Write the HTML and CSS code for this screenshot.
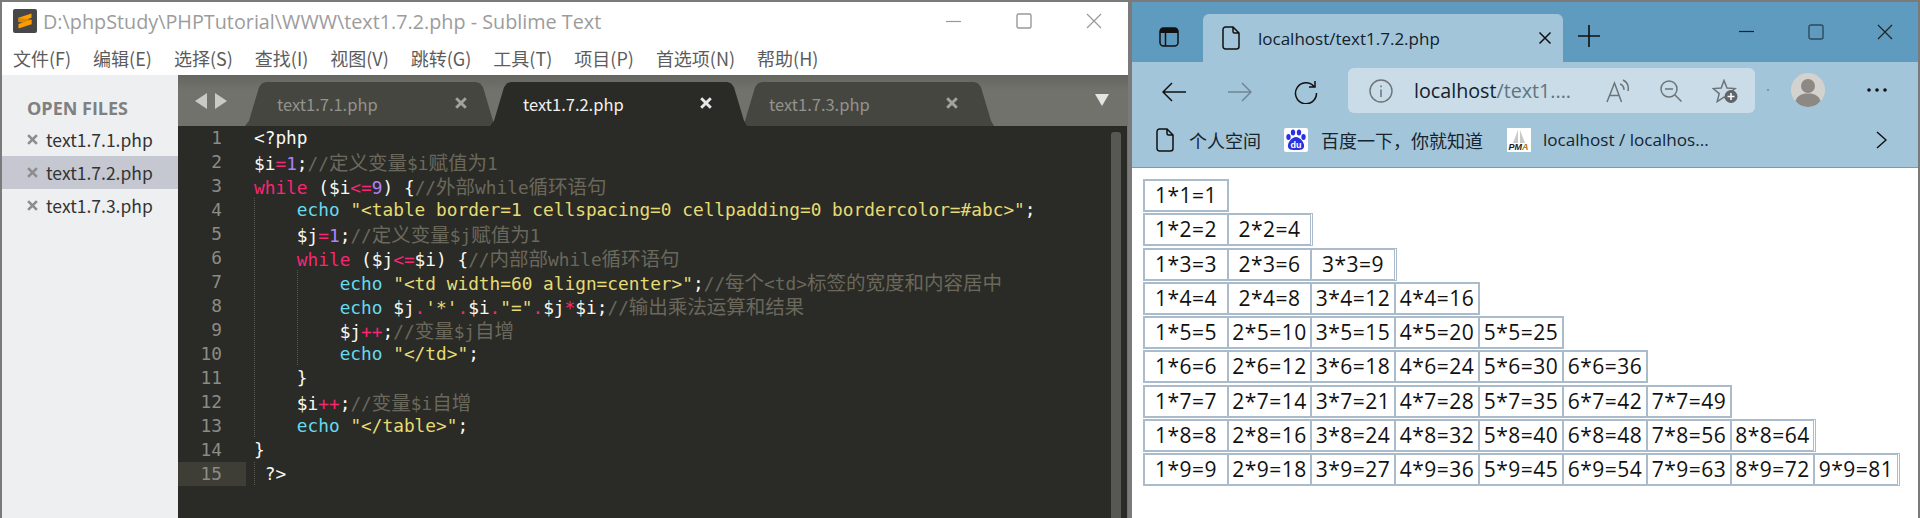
FILE: index.html
```html
<!DOCTYPE html>
<html lang="zh">
<head>
<meta charset="utf-8">
<title>Sublime Text and browser</title>
<link rel="stylesheet" href="styles.css">
</head>
<body>
<div class="desktop">
  <section class="sublime">
    <header class="st-title">
      <svg class="st-logo" viewBox="0 0 24 24"><rect width="24" height="24" rx="2" fill="#474747"/><path d="M18.500 4.500 5.500 8.800v4.200l13-4.300z" fill="#ffa200"/><path d="M5.500 13 18.500 15.200v-4.400L5.500 8.800z" fill="#e08600"/><path d="M18.500 10.800 5.500 15.100v4.300l13-4.200z" fill="#ff9d00"/></svg>
      <span class="st-title-text">D:\phpStudy\PHPTutorial\WWW\text1.7.2.php - Sublime Text</span>
      <div class="st-controls">
        <svg class="ctl" viewBox="0 0 16 16"><path d="M0 8.500h15" stroke="#999" stroke-width="1.200"/></svg>
        <svg class="ctl" viewBox="0 0 16 16"><rect x="1" y="1" width="14" height="14" rx="1.500" fill="none" stroke="#999" stroke-width="1.400"/></svg>
        <svg class="ctl" viewBox="0 0 16 16"><path d="M1 1l14 14M15 1 1 15" stroke="#999" stroke-width="1.200"/></svg>
      </div>
    </header>
    <nav class="st-menu">
      <span>文件(F)</span><span>编辑(E)</span><span>选择(S)</span><span>查找(I)</span><span>视图(V)</span><span>跳转(G)</span><span>工具(T)</span><span>项目(P)</span><span>首选项(N)</span><span>帮助(H)</span>
    </nav>
    <div class="st-body">
      <aside class="st-side">
        <h2 class="side-head">OPEN FILES</h2>
        <div class="side-row"><svg class="x" viewBox="0 0 10 10"><path d="M1 1l8 8M9 1 1 9"/></svg>text1.7.1.php</div>
        <div class="side-row side-sel"><svg class="x" viewBox="0 0 10 10"><path d="M1 1l8 8M9 1 1 9"/></svg>text1.7.2.php</div>
        <div class="side-row"><svg class="x" viewBox="0 0 10 10"><path d="M1 1l8 8M9 1 1 9"/></svg>text1.7.3.php</div>
      </aside>
      <main class="st-main">
        <div class="tabbar">
          <div class="arrows">
            <svg viewBox="0 0 12 16" class="arrow"><path d="M12 0v16L0 8z" fill="#c9c9c6"/></svg>
            <svg viewBox="0 0 12 16" class="arrow"><path d="M0 0v16l12-8z" fill="#c9c9c6"/></svg>
          </div>
          <div class="tab tab-1"><span>text1.7.1.php</span><svg class="tab-x" viewBox="0 0 10 10"><path d="M1 1l8 8M9 1 1 9"/></svg></div>
          <div class="tab tab-active tab-2"><span>text1.7.2.php</span><svg class="tab-x" viewBox="0 0 10 10"><path d="M1 1l8 8M9 1 1 9"/></svg></div>
          <div class="tab tab-3"><span>text1.7.3.php</span><svg class="tab-x" viewBox="0 0 10 10"><path d="M1 1l8 8M9 1 1 9"/></svg></div>
          <svg viewBox="0 0 14 12" class="tab-drop"><path d="M0 0h14L7 12z" fill="#e4e4e2"/></svg>
        </div>
        <div class="editor">
          <div class="lines">
            <div class="l"><b>1</b><code>&lt;?php</code></div>
            <div class="l"><b>2</b><code>$i<u>=</u><s>1</s>;<em>//<q>定义变量</q>$i<q>赋值为</q>1</em></code></div>
            <div class="l"><b>3</b><code><u>while</u> ($i<u>&lt;=</u><s>9</s>) {<em>//<q>外部</q>while<q>循环语句</q></em></code></div>
            <div class="l g1"><b>4</b><code>    <a>echo</a> <var>"&lt;table border=1 cellspacing=0 cellpadding=0 bordercolor=#abc&gt;"</var>;</code></div>
            <div class="l g1"><b>5</b><code>    $j<u>=</u><s>1</s>;<em>//<q>定义变量</q>$j<q>赋值为</q>1</em></code></div>
            <div class="l g1"><b>6</b><code>    <u>while</u> ($j<u>&lt;=</u>$i) {<em>//<q>内部部</q>while<q>循环语句</q></em></code></div>
            <div class="l g2"><b>7</b><code>        <a>echo</a> <var>"&lt;td width=60 align=center&gt;"</var>;<em>//<q>每个</q>&lt;td&gt;<q>标签的宽度和内容居中</q></em></code></div>
            <div class="l g2"><b>8</b><code>        <a>echo</a> $j<u>.</u><var>'*'</var><u>.</u>$i<u>.</u><var>"="</var><u>.</u>$j<u>*</u>$i;<em>//<q>输出乘法运算和结果</q></em></code></div>
            <div class="l g2"><b>9</b><code>        $j<u>++</u>;<em>//<q>变量</q>$j<q>自增</q></em></code></div>
            <div class="l g2"><b>10</b><code>        <a>echo</a> <var>"&lt;/td&gt;"</var>;</code></div>
            <div class="l g1"><b>11</b><code>    }</code></div>
            <div class="l g1"><b>12</b><code>    $i<u>++</u>;<em>//<q>变量</q>$i<q>自增</q></em></code></div>
            <div class="l g1"><b>13</b><code>    <a>echo</a> <var>"&lt;/table&gt;"</var>;</code></div>
            <div class="l"><b>14</b><code>}</code></div>
            <div class="l cur g1"><b>15</b><code> ?&gt;</code></div>
          </div>
          <div class="scroll"></div>
        </div>
      </main>
    </div>
  </section>

  <section class="browser">
    <div class="br-top">
      <svg class="i-panel" viewBox="0 0 20 20"><rect x="1" y="1" width="18" height="18" rx="3.500" fill="none" stroke="#111" stroke-width="1.500"/><path d="M1 6V4.500A3.500 3.500 0 0 1 4.500 1h11A3.500 3.500 0 0 1 19 4.500V6z" fill="#111"/><path d="M6.500 6v13" stroke="#111" stroke-width="1.500"/></svg>
      <div class="br-tab">
        <svg class="i-file" viewBox="0 0 18 24"><path d="M3.500 1H11l6 6v13.500a2.500 2.500 0 0 1-2.500 2.500h-11A2.500 2.500 0 0 1 1 20.500v-17A2.500 2.500 0 0 1 3.500 1zM11 1v4.500A1.500 1.500 0 0 0 12.500 7H17" fill="none" stroke="#111" stroke-width="1.500"/></svg>
        <span class="br-tab-text">localhost/text1.7.2.php</span>
        <svg class="i-tabx" viewBox="0 0 14 14"><path d="M1.500 1.500l11 11M12.500 1.500l-11 11" stroke="#111" stroke-width="1.500"/></svg>
      </div>
      <svg class="i-plus" viewBox="0 0 22 22"><path d="M11 0v22M0 11h22" stroke="#111" stroke-width="1.600"/></svg>
      <div class="br-controls">
        <svg class="ctl" viewBox="0 0 16 16"><path d="M0 7.500h15" stroke="#222" stroke-width="1.200"/></svg>
        <svg class="ctl" viewBox="0 0 16 16"><rect x="1" y="1" width="14" height="14" rx="2" fill="none" stroke="#2c4a5e" stroke-width="1.400"/></svg>
        <svg class="ctl" viewBox="0 0 16 16"><path d="M1 1l14 14M15 1 1 15" stroke="#222" stroke-width="1.200"/></svg>
      </div>
    </div>
    <div class="br-toolbar">
      <svg class="tb tb-back" viewBox="0 0 24 20"><path d="M24 10H1M10 1l-9 9 9 9" fill="none" stroke="#111" stroke-width="1.500"/></svg>
      <svg class="tb tb-fwd" viewBox="0 0 24 20"><path d="M0 10h23M14 1l9 9-9 9" fill="none" stroke="#6f8594" stroke-width="1.500"/></svg>
      <svg class="tb tb-ref" viewBox="0 0 24 24"><path d="M20 6.500A10.500 10.500 0 1 0 22.500 13M21 1v6h-6" fill="none" stroke="#111" stroke-width="1.500"/></svg>
      <div class="addr">
        <svg class="a-info" viewBox="0 0 24 24"><circle cx="12" cy="12" r="11" fill="none" stroke="#6c7478" stroke-width="1.400"/><path d="M12 10.500V18M12 6.500v1.800" stroke="#6c7478" stroke-width="1.500"/></svg>
        <span class="addr-text">localhost<span class="addr-dim">/text1....</span></span>
        <svg class="a-read" viewBox="0 0 24 24"><path d="M1 23 8.500 4l7 19M3.500 16.500h10" fill="none" stroke="#6c7478" stroke-width="1.500"/><path d="M14 5c3 1 4 3 4 6M17 1c4 2 6 6 5 11" fill="none" stroke="#6c7478" stroke-width="1.500"/></svg>
        <svg class="a-zoom" viewBox="0 0 22 22"><circle cx="9" cy="9" r="8" fill="none" stroke="#6c7478" stroke-width="1.500"/><path d="M5 9h8M15 15l6.500 6.500" stroke="#6c7478" stroke-width="1.500"/></svg>
        <svg class="a-fav" viewBox="0 0 26 24"><path d="M12 1.500l3 7.500 8 .6-6.200 5 2 7.500-6.800-4-6.800 4.500 2-8-6-5 8-.6z" fill="none" stroke="#6c7478" stroke-width="1.500"/><circle cx="19" cy="17.500" r="6.500" fill="#5e6468"/><path d="M19 14v7M15.500 17.500h7" stroke="#fff" stroke-width="1.500"/></svg>
      </div>
      <i class="tb-dot"></i>
      <svg class="avatar" viewBox="0 0 34 34"><circle cx="17" cy="17" r="17" fill="#d4d2ce"/><circle cx="17" cy="13" r="7" fill="#8c8883"/><path d="M4.500 28c2-6 7-7.500 12.500-7.500S27.500 22 29.500 28A17 17 0 0 1 17 34 17 17 0 0 1 4.500 28z" fill="#8c8883"/></svg>
      <svg class="dots" viewBox="0 0 20 4"><circle cx="2" cy="2" r="1.800" fill="#111"/><circle cx="10" cy="2" r="1.800" fill="#111"/><circle cx="18" cy="2" r="1.800" fill="#111"/></svg>
    </div>
    <div class="br-marks">
      <svg class="i-file m-file" viewBox="0 0 18 24"><path d="M3.500 1H11l6 6v13.500a2.500 2.500 0 0 1-2.500 2.500h-11A2.500 2.500 0 0 1 1 20.500v-17A2.500 2.500 0 0 1 3.500 1zM11 1v4.500A1.500 1.500 0 0 0 12.500 7H17" fill="none" stroke="#111" stroke-width="1.500"/></svg>
      <span class="mark m1">个人空间</span>
      <svg class="fav-ic" viewBox="0 0 24 24"><rect width="24" height="24" rx="2" fill="#fff"/><g fill="#2932e1"><ellipse cx="4.500" cy="9" rx="2.200" ry="3"/><ellipse cx="9" cy="4.500" rx="2.200" ry="3"/><ellipse cx="15" cy="4.500" rx="2.200" ry="3"/><ellipse cx="19.500" cy="9" rx="2.200" ry="3"/><path d="M12 9c4 0 9 6 8 10-1 3-4 3-8 3s-7 0-8-3c-1-4 4-10 8-10z"/></g><text x="12" y="20" class="du">du</text></svg>
      <span class="mark m2">百度一下，你就知道</span>
      <svg class="fav-ic" viewBox="0 0 24 24"><rect width="24" height="24" fill="#fff"/><path d="M11 2 6 15h5zM13 2l5 13h-5z" fill="#c9c9c9"/><text x="1.500" y="22" class="pma">PM<tspan class="pma-o">A</tspan></text></svg>
      <span class="mark m3">localhost / localhos...</span>
      <svg class="chev" viewBox="0 0 11 18"><path d="M1 1l9 8-9 8" fill="none" stroke="#111" stroke-width="1.500"/></svg>
    </div>
    <div class="page">
      <table class="mt"><tr><td>1*1=1</td></tr></table>
      <table class="mt mt-gap"><tr><td>1*2=2</td><td>2*2=4</td></tr></table>
      <table class="mt mt-gap"><tr><td>1*3=3</td><td>2*3=6</td><td>3*3=9</td></tr></table>
      <table class="mt"><tr><td>1*4=4</td><td>2*4=8</td><td>3*4=12</td><td>4*4=16</td></tr></table>
      <table class="mt"><tr><td>1*5=5</td><td>2*5=10</td><td>3*5=15</td><td>4*5=20</td><td>5*5=25</td></tr></table>
      <table class="mt"><tr><td>1*6=6</td><td>2*6=12</td><td>3*6=18</td><td>4*6=24</td><td>5*6=30</td><td>6*6=36</td></tr></table>
      <table class="mt"><tr><td>1*7=7</td><td>2*7=14</td><td>3*7=21</td><td>4*7=28</td><td>5*7=35</td><td>6*7=42</td><td>7*7=49</td></tr></table>
      <table class="mt mt-gap"><tr><td>1*8=8</td><td>2*8=16</td><td>3*8=24</td><td>4*8=32</td><td>5*8=40</td><td>6*8=48</td><td>7*8=56</td><td>8*8=64</td></tr></table>
      <table class="mt mt-gap"><tr><td>1*9=9</td><td>2*9=18</td><td>3*9=27</td><td>4*9=36</td><td>5*9=45</td><td>6*9=54</td><td>7*9=63</td><td>8*9=72</td><td>9*9=81</td></tr></table>
    </div>
  </section>
</div>
</body>
</html>
```
FILE: styles.css
```css
* { box-sizing: border-box; }
html, body { margin: 0; height: 518px; overflow: hidden; }
body { background: #7a7a7a; font-family: "Noto Sans CJK SC", sans-serif; }
.desktop { display: flex; height: 518px; padding: 2px 2px 0 2px; gap: 4px; }

/* Sublime window */
.sublime { width: 1126px; display: flex; flex-direction: column; background: #fff; }
.st-title { height: 38px; display: flex; align-items: center; padding-left: 11px; }
.st-logo { width: 24px; height: 24px; }
.st-title-text { margin-left: 6px; font: 19.800px "Open Sans", sans-serif; color: #9c9c9c; white-space: pre; }
.st-controls { margin-left: auto; display: flex; gap: 54px; padding-right: 26px; }
.ctl { width: 16px; height: 16px; display: block; }
.st-menu { height: 33px; display: flex; gap: 22px; padding: 2px 0 0 11px; align-items: center; font-size: 18px; color: #5c5c5c; white-space: nowrap; }
.st-body { flex: 1; display: flex; min-height: 0; margin-top: 2px; background: #eff0f2; }
.st-side { width: 176px; background: #eeeff1; }
.side-head { margin: 0; height: 48px; padding: 22px 0 0 25px; font: 700 18px/22px "Open Sans", sans-serif; color: #808080; }
.side-row { height: 33px; display: flex; align-items: center; padding-left: 25px; font-size: 17.500px; color: #333; }
.side-sel { background: #c5c8d0; }
.x { width: 11px; height: 11px; margin-right: 8px; flex: none; fill: none; stroke: #8d8d8d; stroke-width: 2.400; }
.st-main { flex: 1; display: flex; flex-direction: column; min-width: 0; background: #72726d; }
.tabbar { height: 51px; flex: none; display: flex; align-items: flex-end; background: linear-gradient(#666661, #72726d 30%); position: relative; }
.arrows { position: absolute; left: 17px; top: 18px; display: flex; gap: 8px; }
.arrow { width: 12px; height: 16px; display: block; }
.tab { height: 44px; background: #464641; color: #93938d; font-size: 16.500px; display: flex; align-items: center; clip-path: polygon(0 100%, 4px 88%, 14px 12%, 17px 3%, 21px 0, calc(100% - 20px) 0, calc(100% - 16px) 3%, calc(100% - 13px) 12%, calc(100% - 3px) 88%, 100% 100%); }
.tab span { display: block; }
.tab-1 { width: 251px; margin-left: 67px; padding-left: 32px; }
.tab-2 { width: 257px; margin-left: -6px; padding-left: 33px; }
.tab-3 { width: 253px; margin-left: -6px; padding-left: 28px; }
.tab-active { background: #2a2b26; color: #f2f2f0; position: relative; z-index: 1; }
.tab-x { width: 12px; height: 12px; flex: none; margin-left: auto; margin-top: -2px; fill: none; stroke: #a3a39e; stroke-width: 2.400; }
.tab-1 .tab-x { margin-right: 29px; }
.tab-2 .tab-x { margin-right: 35px; }
.tab-3 .tab-x { margin-right: 36px; }
.tab-active .tab-x { stroke: #e8e8e6; }
.tab-drop { position: absolute; left: 917px; top: 19px; width: 14px; height: 12px; }
.editor { flex: 1; width: 949px; display: flex; background: #2a2b26; min-height: 0; position: relative; }
.lines { flex: 1; }
.l { height: 24px; display: flex; font: 17.800px/24px "DejaVu Sans Mono", monospace; color: #f8f8f2; white-space: pre; }
.l b { width: 68px; flex: none; padding-right: 24px; font-weight: 400; text-align: right; color: #8c8c85; }
.l code { font: inherit; padding-left: 8px; flex: 1; background-repeat: no-repeat; }
.g1 code { background-image: repeating-linear-gradient(#5c5c55 0 1px, transparent 1px 2px); background-size: 1px 100%; background-position: 8px 0; }
.g2 code { background-image: repeating-linear-gradient(#5c5c55 0 1px, transparent 1px 2px), repeating-linear-gradient(#5c5c55 0 1px, transparent 1px 2px); background-size: 1px 100%, 1px 100%; background-position: 8px 0, 50.500px 0; }
.cur b { background: #3e3d36; }
.l u { text-decoration: none; color: #f92672; }
.l s { text-decoration: none; color: #ae81ff; }
.l a { color: #66d9ef; }
.l var { font-style: normal; color: #e6db74; }
.l em { font-style: normal; color: #6a685c; }
.l q { quotes: none; font-family: "Noto Sans CJK SC", sans-serif; font-size: 19.500px; }
.scroll { position: absolute; right: 6px; top: 6px; bottom: 0; width: 10px; background: #575753; border-radius: 3px 3px 0 0; }

/* Browser window */
.browser { flex: 1; display: flex; flex-direction: column; min-width: 0; background: #fff; }
.br-top { height: 60px; flex: none; background: #5f9abf; display: flex; align-items: flex-start; }
.i-panel { width: 20px; height: 20px; margin: 25px 0 0 27px; }
.br-tab { width: 360px; height: 48px; margin: 12px 0 0 24px; background: #a3c5da; border-radius: 6px 6px 0 0; display: flex; align-items: center; }
.i-file { width: 18px; height: 24px; flex: none; }
.br-tab .i-file { margin-left: 19px; }
.br-tab-text { margin-left: 18px; font: 17px "Open Sans", sans-serif; color: #12212c; white-space: nowrap; }
.i-tabx { width: 14px; height: 14px; margin-left: auto; margin-right: 11px; }
.i-plus { width: 22px; height: 22px; margin: 23px 0 0 15px; }
.br-controls { margin-left: auto; margin-top: 22px; display: flex; gap: 53px; padding-right: 25px; }
.br-toolbar { height: 60px; flex: none; background: #a3c5da; display: flex; align-items: center; padding: 0 0 0 30px; }
.tb { width: 24px; height: 24px; flex: none; }
.tb-fwd { margin-left: 42px; }
.tb-ref { margin-left: 42px; }
.addr { width: 407px; height: 45px; margin-left: 30px; background: #c9dce8; border-radius: 6px; display: flex; align-items: center; padding-left: 21px; flex: none; align-self: flex-start; margin-top: 6px; }
.a-info { width: 24px; height: 24px; flex: none; }
.addr-text { margin-left: 21px; width: 169px; font: 19.700px "Open Sans", sans-serif; color: #12212c; white-space: nowrap; }
.addr-dim { color: #5f7482; }
.a-read { width: 24px; height: 24px; margin-left: 23px; flex: none; }
.a-zoom { width: 22px; height: 22px; margin-left: 30px; flex: none; }
.a-fav { width: 26px; height: 24px; margin-left: 30px; flex: none; }
.tb-dot { width: 2px; height: 2px; background: #7d98a9; margin-left: 12px; align-self: flex-start; margin-top: 27px; }
.avatar { width: 34px; height: 34px; margin-left: 22px; flex: none; align-self: flex-start; margin-top: 11px; }
.dots { width: 20px; height: 4px; margin-left: 42px; flex: none; align-self: flex-start; margin-top: 26px; }
.br-marks { height: 46px; flex: none; background: #a3c5da; border-bottom: 1px solid #7d9bb0; display: flex; align-items: flex-start; padding: 6px 0 0 24px; }
.m-file { display: block; }
.mark { font-size: 18px; line-height: 24px; color: #16242e; white-space: nowrap; }
.m1 { margin-left: 15px; }
.fav-ic { width: 24px; height: 24px; flex: none; }
.m1 + .fav-ic { margin-left: 23px; }
.m2 { margin-left: 13px; }
.m2 + .fav-ic { margin-left: 24px; }
.m3 { margin-left: 12px; font: 17.100px/24px "Open Sans", sans-serif; }
.chev { width: 11px; height: 18px; margin-left: auto; margin-right: 31px; margin-top: 3px; }
.du { font: 700 9px "Liberation Sans", sans-serif; fill: #fff; text-anchor: middle; }
.pma { font: italic 700 9px "Liberation Sans", sans-serif; fill: #1c1c1c; }
.pma-o { fill: #b8730a; }
.page { flex: 1; display: flex; flex-direction: column; align-items: flex-start; gap: 1.300px; padding: 11px 0 0 11px; min-height: 0; }
.mt { border: 1px solid #aabbcc; border-spacing: 0; table-layout: fixed; flex: none; }
.mt-gap { padding-right: 1px; }
.mt td { width: 84px; min-width: 84px; height: 31px; padding: 0; border: 1px solid #aabbcc; text-align: center; font: 21px/29px "Open Sans", sans-serif; letter-spacing: 0.500px; color: #111; white-space: nowrap; }
.mt td:nth-child(2), .mt td:nth-child(8) { width: 83px; min-width: 83px; }
```
